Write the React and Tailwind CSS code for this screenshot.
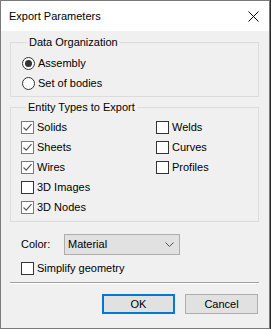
import React from "react";

const font = { fontFamily: '"Liberation Sans", Arial, sans-serif' };

function Check({ checked, label }) {
  return (
    <div className="flex items-center h-[20px]">
      <div
        className={
          "w-[13px] h-[13px] bg-white border flex items-center justify-center shrink-0 " +
          (checked ? "border-[#7a7a7a]" : "border-[#333333]")
        }
      >
        {checked && (
          <svg width="11" height="11" viewBox="0 0 11 11">
            <path d="M1.5 5.5 L4.2 8.2 L9.5 2.2" fill="none" stroke="#5a5a5a" strokeWidth="1.2" />
          </svg>
        )}
      </div>
      <span className="ml-[3px] text-[11px] text-black leading-none">{label}</span>
    </div>
  );
}

function Radio({ checked, label }) {
  return (
    <div className="flex items-center h-[20px]">
      <div className="w-[13px] h-[13px] rounded-full bg-white border border-[#333333] flex items-center justify-center shrink-0">
        {checked && <div className="w-[7px] h-[7px] rounded-full bg-[#333333]" />}
      </div>
      <span className="ml-[3px] text-[11px] text-black leading-none">{label}</span>
    </div>
  );
}

export default function App() {
  return (
    <div style={font} className="w-[271px] h-[329px] bg-[#2a2a2a] flex">
      <div className="w-[270px] h-[329px] border border-[#7a7a7a] bg-[#f0f0f0] flex flex-col">
        <div className="h-[30px] bg-white flex items-center justify-between pl-[8px] pr-[8px] shrink-0">
          <span className="text-[11px] text-black">Export Parameters</span>
          <svg width="11" height="11" viewBox="0 0 11 11" className="mr-[2px]">
            <path d="M0.5 0.5 L10.5 10.5 M10.5 0.5 L0.5 10.5" stroke="#000" strokeWidth="1" />
          </svg>
        </div>

        <fieldset className="ml-[9px] mt-[4px] w-[249px] border border-[#dcdcdc] pl-[11px] pt-[3px] pb-[3px]">
          <legend className="ml-[5px] px-[2px] text-[11px] leading-[15px] text-black">Data Organization</legend>
          <Radio checked label="Assembly" />
          <Radio label="Set of bodies" />
        </fieldset>

        <fieldset className="ml-[9px] mt-[3px] w-[249px] border border-[#dcdcdc] pl-[10px] pt-[2px] pb-[4px]">
          <legend className="ml-[5px] px-[2px] text-[11px] leading-[15px] text-black">Entity Types to Export</legend>
          <div className="flex">
            <div className="w-[135px] flex flex-col">
              <Check checked label="Solids" />
              <Check checked label="Sheets" />
              <Check checked label="Wires" />
              <Check label="3D Images" />
              <Check checked label="3D Nodes" />
            </div>
            <div className="flex flex-col">
              <Check label="Welds" />
              <Check label="Curves" />
              <Check label="Profiles" />
            </div>
          </div>
        </fieldset>

        <div className="flex items-center ml-[20px] mt-[12px]">
          <span className="w-[43px] text-[11px] text-black">Color:</span>
          <div className="w-[116px] h-[21px] bg-[#e1e1e1] border border-[#adadad] flex items-center justify-between pl-[3px] pr-[5px]">
            <span className="text-[11px] text-black">Material</span>
            <svg width="9" height="6" viewBox="0 0 9 6">
              <path d="M0.5 0.5 L4.5 4.5 L8.5 0.5" fill="none" stroke="#555" strokeWidth="1" />
            </svg>
          </div>
        </div>

        <div className="ml-[20px] mt-[3px]">
          <Check label="Simplify geometry" />
        </div>

        <div className="ml-[9px] mt-[4px] w-[249px] border-t border-t-[#a0a0a0] border-b border-b-white" />

        <div className="flex justify-end gap-[10px] mr-[11px] mt-[10px]">
          <button className="w-[73px] h-[20px] bg-[#e1e1e1] border-2 border-[#0078d7] text-[11px] text-black flex items-center justify-center">
            OK
          </button>
          <button className="w-[73px] h-[20px] bg-[#e1e1e1] border border-[#adadad] text-[11px] text-black flex items-center justify-center">
            Cancel
          </button>
        </div>
      </div>
    </div>
  );
}
